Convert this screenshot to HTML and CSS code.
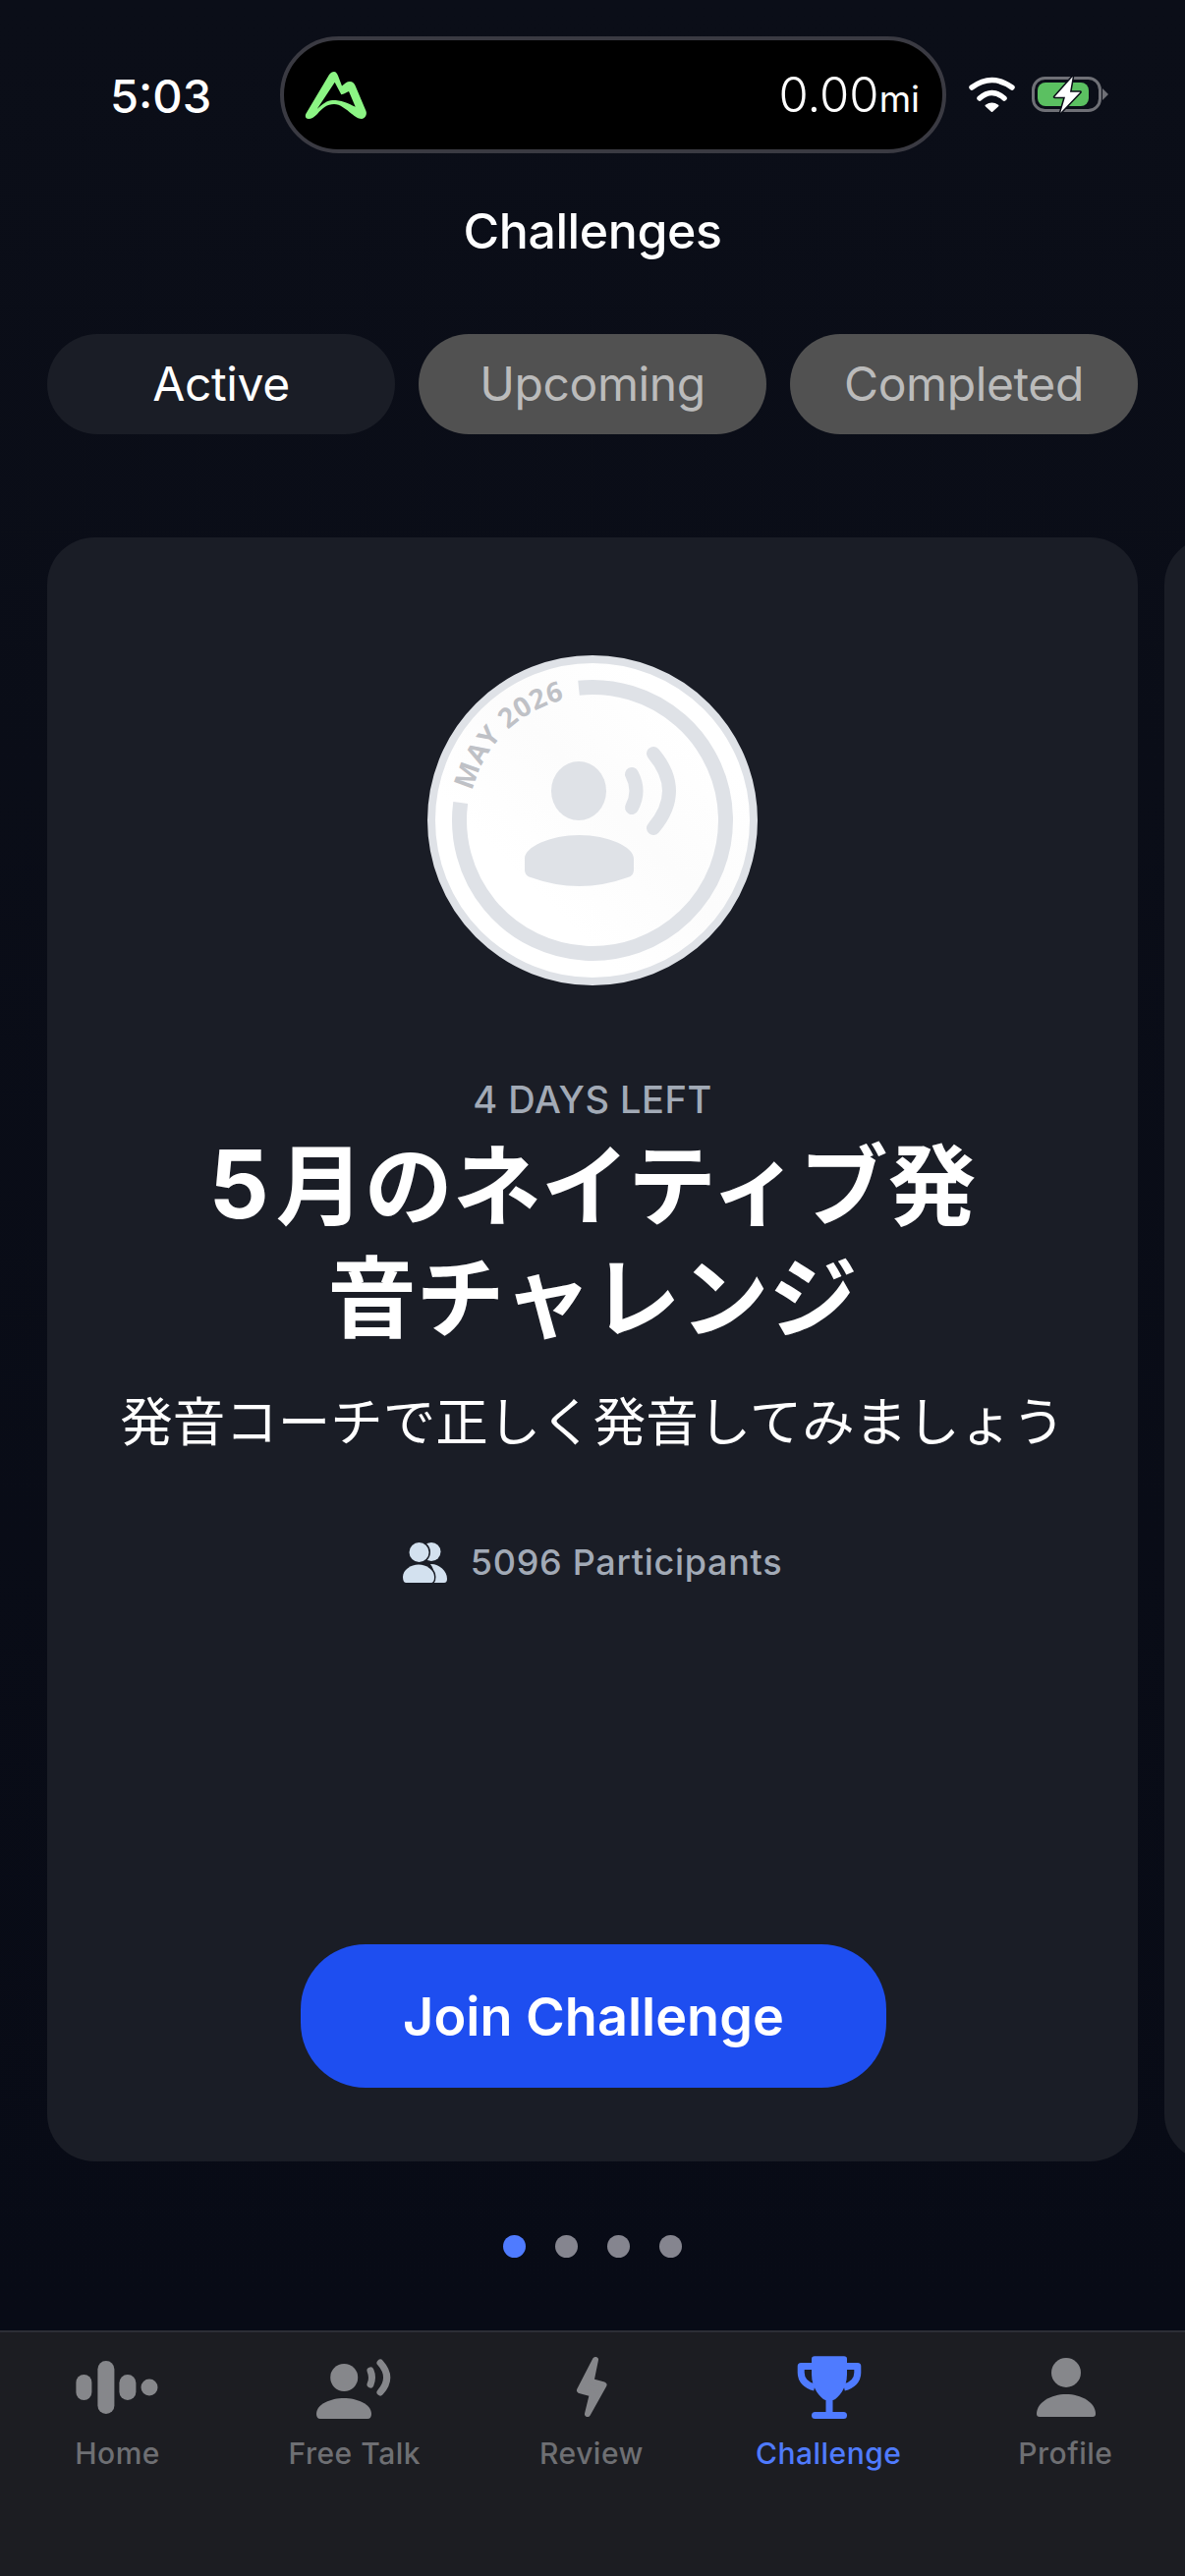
FILE: index.html
```html
<!DOCTYPE html>
<html lang="en">
<head>
<meta charset="utf-8">
<title>Challenges</title>
<link rel="stylesheet" href="styles.css">
</head>
<body>
<div class="page">
  <div class="status">
    <div class="time">5:03</div>
    <div class="island">
      <svg class="logo" viewBox="0 0 62 48"><path fill-rule="evenodd" d="M29 0C31 0 32 2 33 4L37 14.500C40 12 42 10 45 10C48 10 49.500 12 50.500 14L61.500 40C63 44 60 48 57 48C53 48 50 45 47 43C41 38 35 33 29 33C22 33 17 37 12 43C9 46 6 48 3 48C0 48 -1 45 .5 42.500L24 3C25.500 1 27 0 29 0ZM11.700 38C17 33 22 29 27.300 29C32 29 36 29.500 39 30.700C43 32 47 34 50.700 35.700L44 20C41 21.500 39 23 36.300 23.300L29.700 10.700Z"/></svg>
      <div class="miles">0.00<span class="unit">mi</span></div>
    </div>
    <svg class="wifi" viewBox="0 0 47 35"><path class="wifi-arc" d="M3 10Q23.500 -5 44 10"/><path class="wifi-arc" d="M11 21Q23.500 10 36 21"/><path class="wifi-dot" d="M17.500 28.500Q23.500 24.500 29.500 28.500L23.500 34Z"/></svg>
    <svg class="battery" viewBox="0 0 78 40">
      <rect class="batt-case" x="1.500" y="2.500" width="68" height="33" rx="12"/>
      <rect class="batt-fill" x="6" y="7" width="52" height="24" rx="8"/>
      <path class="batt-nub" d="M72 13L78 19L72 25Z"/>
      <path class="batt-bolt" d="M41.700 1L23.300 21.700H34L29.300 37.700L49.300 16.700H39Z"/>
    </svg>
  </div>

  <h1 class="heading">Challenges</h1>

  <div class="tabs">
    <div class="tab tab-on">Active</div>
    <div class="tab">Upcoming</div>
    <div class="tab">Completed</div>
  </div>

  <div class="carousel">
    <section class="card">
      <svg class="medal" viewBox="0 0 336 336">
        <defs>
          <linearGradient id="sheen" x1="0" y1="1" x2="1" y2="0">
            <stop offset="0.3" stop-color="#ffffff"/>
            <stop offset="0.55" stop-color="#fcfcfc"/>
            <stop offset="0.8" stop-color="#ffffff"/>
          </linearGradient>
          <path id="rim" d="M45.600 138.100A126 126 0 0 1 168 42"/>
        </defs>
        <circle class="medal-disc" cx="168" cy="168" r="164"/>
        <path class="medal-ring" d="M154 33.200A135.500 135.500 0 1 1 33.700 150"/>
        <text class="medal-text"><textPath href="#rim">MAY 2026</textPath></text>
        <ellipse class="medal-shape" cx="154" cy="138" rx="28" ry="30"/>
        <path class="medal-shape" d="M99 207C99 195 125 183 154.500 183C184 183 210 195 210 207V218C210 222 208 225 204 226Q154.500 244 105 226C101 225 99 222 99 218Z"/>
        <path class="medal-wave" d="M208 121Q217 138 208 155"/>
        <path class="medal-wave" d="M230 100Q262 138 230 176"/>
      </svg>
      <div class="left">4 DAYS LEFT</div>
      <h2 class="name"><span class="digit">5</span>月のネイティブ発音チャレンジ</h2>
      <p class="desc">発音コーチで正しく発音してみましょう</p>
      <div class="people">
        <svg class="people-icon" viewBox="0 0 45 41"><circle cx="29" cy="9.500" r="9.500"/><path d="M29 22C37 22 45 29 45 37C45 39.500 44 41 42 41H31C33 36 33 29 28 22Z"/><circle class="people-front" cx="16.500" cy="10" r="10"/><path class="people-front" d="M0 35C0 28 8 22.500 16 22.500C24 22.500 32 28 32 35C32 39 31 41 28 41H3C1 41 0 38 0 35Z"/></svg>
        <span class="people-text">5096 Participants</span>
      </div>
      <button class="join">Join Challenge</button>
    </section>
    <section class="card"></section>
  </div>

  <div class="dots">
    <span class="dot dot-on"></span><span class="dot"></span><span class="dot"></span><span class="dot"></span>
  </div>

  <nav class="nav">
    <div class="nav-item">
      <svg class="nav-icon" viewBox="0 0 130 70"><rect x="21.400" y="20" width="16" height="26" rx="8"/><rect x="43.400" y="6" width="17" height="54" rx="8.500"/><rect x="65.400" y="20" width="17" height="26" rx="8.500"/><circle cx="96" cy="33" r="8.500"/></svg>
      <span class="nav-label">Home</span>
    </div>
    <div class="nav-item">
      <svg class="nav-icon" viewBox="0 0 130 70"><circle cx="53.200" cy="23" r="14"/><path d="M25 60C25 50 40 44 53 44S81 50 81 60Q81 65 77 65H29Q25 65 25 60Z"/><path class="nav-wave" d="M80 16Q83 23 80 30"/><path class="nav-wave" d="M90 8Q103.400 23 90 38"/></svg>
      <span class="nav-label">Free Talk</span>
    </div>
    <div class="nav-item">
      <svg class="nav-icon" viewBox="0 0 130 70"><path class="nav-bolt" d="M68 5L52 36L65 39.500L60 60L76.500 30.500L63.500 27Z"/></svg>
      <span class="nav-label">Review</span>
    </div>
    <div class="nav-item nav-on">
      <svg class="nav-icon" viewBox="0 0 130 70"><path d="M47 4Q47 1.300 50 1.300H80Q83 1.300 83 4V20C83 34 74 44 69 46H61C56 44 47 34 47 20Z"/><path class="nav-handle" d="M47 11.500H36.200V18C36.200 26 42 31 50 33"/><path class="nav-handle" d="M83 11.500H93.800V18C93.800 26 88 31 80 33"/><rect x="61.500" y="44" width="7" height="16"/><rect x="47" y="58" width="36" height="7" rx="3.500"/></svg>
      <span class="nav-label">Challenge</span>
    </div>
    <div class="nav-item">
      <svg class="nav-icon" viewBox="0 0 130 70"><circle cx="65" cy="18" r="15"/><path d="M35 60C35 48 50 40 65 40S95 48 95 60Q95 63 92 63H38Q35 63 35 60Z"/></svg>
      <span class="nav-label">Profile</span>
    </div>
  </nav>
</div>
</body>
</html>
```

FILE: styles.css
```css
* { box-sizing: border-box; margin: 0; padding: 0; }
html, body { background: #0a0d17; }
body { font-family: Inter, "Noto Sans CJK JP", sans-serif; color: #fff; }

.page {
  width: 1206px;
  height: 2622px;
  overflow: hidden;
  display: flex;
  flex-direction: column;
  background: linear-gradient(#0b0e18, #080b16 90%);
}

/* status bar */
.status { display: flex; align-items: center; padding: 37px 0 0 112px; }
.time { width: 173px; padding-top: 2px; font-size: 47px; font-weight: 550; line-height: 117px; }
.island {
  width: 678px;
  height: 119px;
  border: 4px solid #3a3a42;
  border-radius: 60px;
  background: #000;
  display: flex;
  align-items: center;
  justify-content: space-between;
  padding: 0 23px 0 22px;
  margin-right: 23px;
}
.logo { width: 62px; height: 48px; fill: #8cf584; overflow: visible; }
.miles { font-size: 49px; font-weight: 300; }
.unit { font-size: 37px; font-weight: 400; }
.wifi { width: 47px; height: 35px; margin-right: 17px; overflow: visible; }
.wifi-arc { fill: none; stroke: #fff; stroke-width: 5.500; stroke-linecap: round; }
.wifi-dot { fill: #fff; stroke: #fff; stroke-width: 2; stroke-linejoin: round; }
.battery { width: 78px; height: 40px; }
.batt-case { fill: none; stroke: #6f7076; stroke-width: 3; }
.batt-fill { fill: #5bc061; }
.batt-nub { fill: #6f7076; }
.batt-bolt { fill: #fff; stroke: #0a0d17; stroke-width: 3; paint-order: stroke; stroke-linejoin: round; }

/* heading */
.heading {
  margin-top: 49px;
  text-align: center;
  font-size: 50px;
  font-weight: 550;
  letter-spacing: -.4px;
  line-height: 60px;
}

/* tabs */
.tabs { display: flex; gap: 24px; margin-top: 75px; padding: 0 48px; }
.tab {
  flex: 1;
  height: 102px;
  border-radius: 51px;
  background: #515151;
  color: #bbbbbb;
  font-size: 48px;
  letter-spacing: -.4px;
  line-height: 102px;
  text-align: center;
}
.tab-on { background: #1a1d26; color: #fff; }

/* carousel */
.carousel { display: flex; gap: 27px; margin-top: 105px; padding-left: 48px; }
.card {
  flex: none;
  width: 1110px;
  height: 1653px;
  border-radius: 48px;
  background: #1a1d26;
  padding: 120px 0 75px;
  display: flex;
  flex-direction: column;
  align-items: center;
}

/* medal */
.medal { width: 336px; height: 336px; flex: none; }
.medal-disc { fill: url(#sheen); stroke: #dfe2e7; stroke-width: 8; }
.medal-ring { fill: none; stroke: #dfe2e7; stroke-width: 15; }
.medal-text { font-family: "Open Sans", sans-serif; font-size: 28px; font-weight: 700; letter-spacing: .6px; fill: #bfc1c6; }
.medal-shape { fill: #dfe2e7; }
.medal-wave { fill: none; stroke: #dfe2e7; stroke-width: 14; stroke-linecap: round; }

/* card text */
.left { margin-top: 94px; font-size: 38px; font-weight: 500; letter-spacing: .5px; line-height: 44px; color: #a2aab6; }
.name {
  width: 820px;
  margin-top: 10px;
  font-size: 90px;
  font-weight: 700;
  line-height: 114px;
  text-align: center;
}
.digit { font-size: 96px; line-height: 1; letter-spacing: 7px; }
.desc { margin-top: 34px; font-size: 53.500px; font-weight: 400; line-height: 70px; }
.people { display: flex; align-items: center; gap: 24px; margin-top: 82px; }
.people-icon { width: 45px; height: 41px; fill: #d3e1ef; }
.people-front { stroke: #1a1d26; stroke-width: 3; paint-order: stroke; }
.people-text { font-size: 36px; font-weight: 500; line-height: 50px; color: #a2aab6; letter-spacing: .7px; }
.join {
  margin: auto 0 0 2px;
  width: 596px;
  height: 146px;
  border: 0;
  border-radius: 66px;
  background: #1e4ef0;
  color: #fff;
  font-family: inherit;
  font-size: 54px;
  font-weight: 600;
}

/* dots */
.dots { display: flex; justify-content: center; gap: 30px; margin-top: 75px; }
.dot { width: 23px; height: 23px; border-radius: 50%; background: #85858f; }
.dot-on { background: #4f7bff; }

/* tab bar */
.nav {
  flex: 1;
  margin-top: 74px;
  padding-top: 23px;
  border-top: 2px solid #2c2e36;
  background: #1c1d22;
  display: grid;
  grid-template-columns: repeat(5, 1fr);
  align-content: start;
}
.nav-item { display: flex; flex-direction: column; align-items: center; color: #6e6f73; }
.nav-icon { width: 130px; height: 70px; fill: #86878b; stroke: none; }
.nav-label { margin: 10px 2px 0 0; font-size: 30px; font-weight: 500; line-height: 40px; letter-spacing: .5px; }
.nav-wave { fill: none; stroke: #86878b; stroke-width: 7; stroke-linecap: round; }
.nav-bolt { stroke: #86878b; stroke-width: 6; stroke-linejoin: round; }
.nav-on { color: #4f7bff; }
.nav-on .nav-icon { fill: #4f7bff; }
.nav-handle { fill: none; stroke: #4f7bff; stroke-width: 7; stroke-linejoin: round; }
```
